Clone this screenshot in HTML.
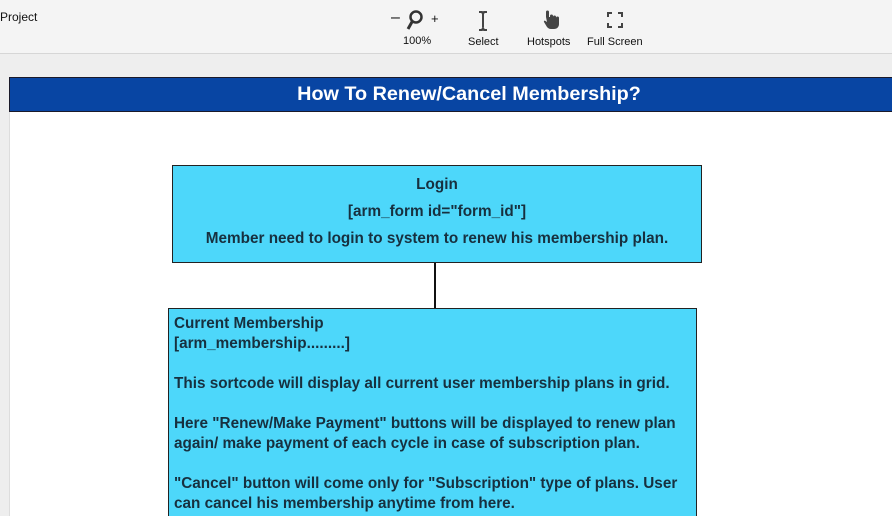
<!DOCTYPE html>
<html><head><meta charset="utf-8"><style>
*{margin:0;padding:0;box-sizing:border-box}
html,body{width:892px;height:516px;overflow:hidden}
body{background:#eeeeee;font-family:"Liberation Sans",Arial,sans-serif;position:relative}
.tb{position:absolute;left:0;top:0;width:892px;height:54px;background:#f4f4f4;border-bottom:1px solid #d6d6d6}
.lbl{position:absolute;font-size:11px;color:#111;white-space:nowrap}
.canvas{position:absolute;left:9px;top:77px;width:883px;height:439px;background:#fff;border-left:1px solid #ddd}
.hdr{position:absolute;left:9px;top:77px;width:883px;height:35px;background:#0845a3;border:1px solid #1a1a2a;border-right:none;color:#fff;font-weight:bold;font-size:19.8px;text-align:center;line-height:33px;padding-left:36px}
.box{position:absolute;background:#4dd7fa;border:1px solid #222;color:#17303f;font-weight:bold;font-size:15.3px;white-space:nowrap}
</style></head><body>
<div class="tb">
<div class="lbl" style="left:0;top:10px;font-size:12px">Project</div>
<div class="lbl" style="left:391px;top:9px;font-size:16px">–</div>
<svg style="position:absolute;left:405px;top:10px" width="20" height="22"><circle cx="11" cy="7" r="5.5" fill="none" stroke="#333" stroke-width="2.5"/><line x1="7.5" y1="11" x2="3" y2="19" stroke="#333" stroke-width="3"/></svg>
<div class="lbl" style="left:431px;top:11px;font-size:13px">+</div>
<div class="lbl" style="left:403px;top:35px">100%</div>
<svg style="position:absolute;left:476px;top:10px" width="14" height="22"><path d="M3 2h3l1 2 1-2h3M7 4v13M3 20h3l1-2 1 2h3" fill="none" stroke="#444" stroke-width="2"/></svg>
<div class="lbl" style="left:468px;top:36px">Select</div>
<svg style="position:absolute;left:540px;top:9px" width="20" height="22"><path d="M6 8v-5a1.5 1.5 0 013 0v5h1v-1a1.5 1.5 0 013 0v1a1.5 1.5 0 013 0v1a1.5 1.5 0 013 0v6c0 3-2 5-5 5h-3c-2 0-3-1-4-2l-3-5c-.5-1 .5-2 1.5-1l1.5 1z" fill="#444"/></svg>
<div class="lbl" style="left:527px;top:36px">Hotspots</div>
<svg style="position:absolute;left:607px;top:12px" width="16" height="16"><path d="M1 5V1h4M11 1h4v4M15 11v4h-4M5 15H1v-4" fill="none" stroke="#444" stroke-width="2"/></svg>
<div class="lbl" style="left:587px;top:36px">Full Screen</div>
</div>
<div class="canvas"></div>
<div class="hdr">How To Renew/Cancel Membership?</div>
<div class="box" style="left:172px;top:165px;width:530px;height:98px;text-align:center;line-height:27px;padding-top:5px">Login<br>[arm_form id="form_id"]<br>Member need to login to system to renew his membership plan.</div>
<div style="position:absolute;left:434px;top:263px;width:2px;height:45px;background:#111"></div>
<div class="box" style="left:168px;top:308px;width:529px;height:208px;border-bottom:none;line-height:20px;padding:5px 0 0 5px">Current Membership<br>[arm_membership.........]<br><br>This sortcode will display all current user membership plans in grid.<br><br>Here "Renew/Make Payment" buttons will be displayed to renew plan<br>again/ make payment of each cycle in case of subscription plan.<br><br>"Cancel" button will come only for "Subscription" type of plans. User<br>can cancel his membership anytime from here.</div>
</body></html>
